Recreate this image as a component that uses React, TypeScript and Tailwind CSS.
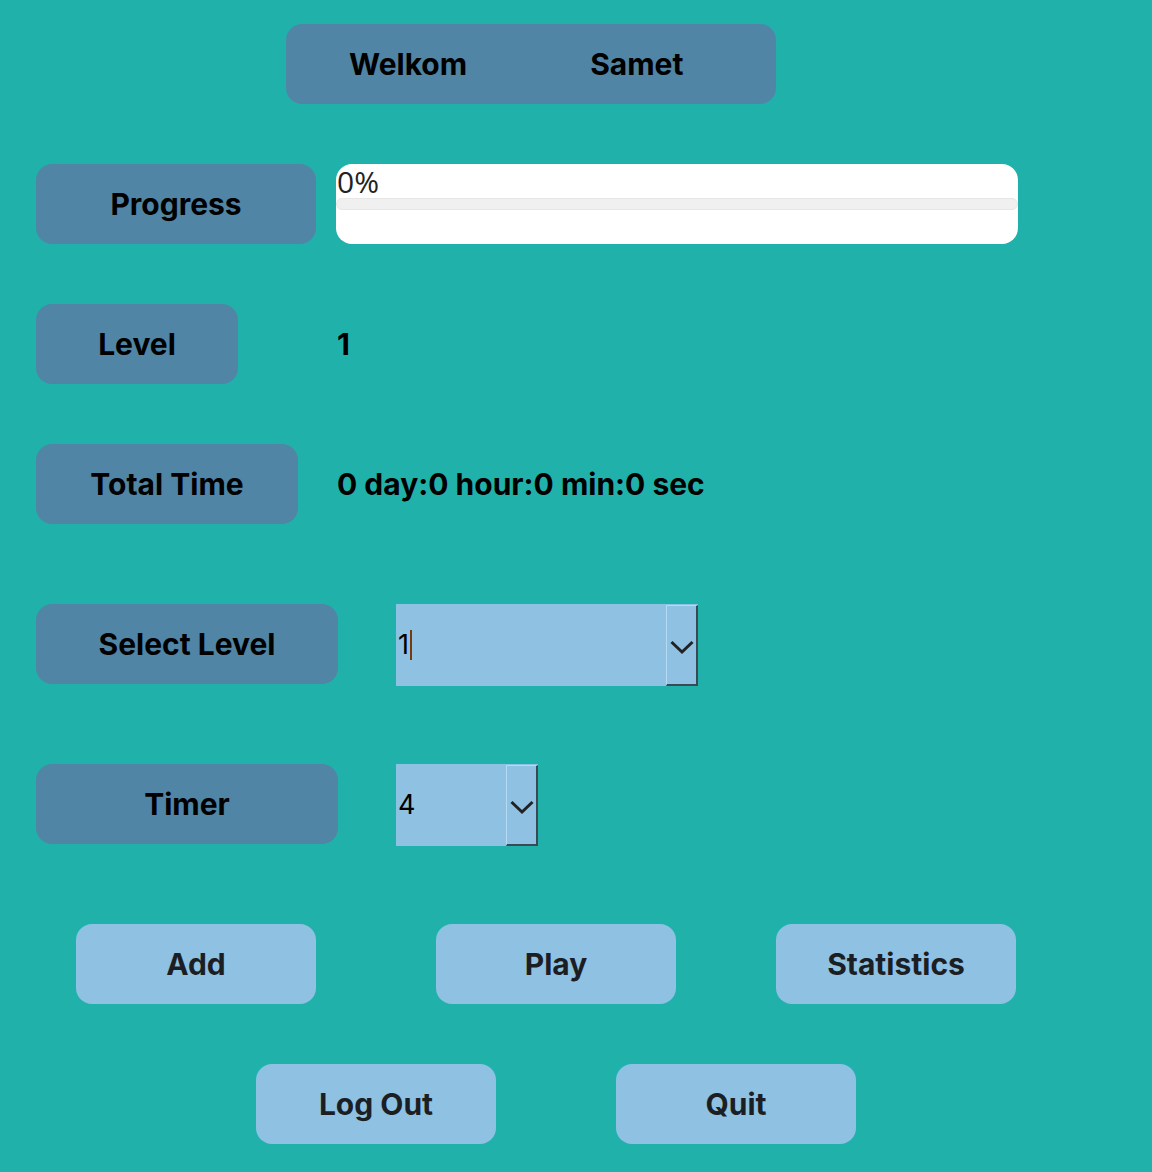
import React from "react";

const dark = "bg-[#5085A5]";
const light = "bg-[#8FC1E3]";

function Label({ w, children }: { w: string; children: React.ReactNode }) {
  return (
    <div className={`${dark} ${w} h-[80px] rounded-[16px] flex items-center justify-center text-[30px] font-bold text-black shrink-0`}>
      {children}
    </div>
  );
}

function LightBtn({ children }: { children: React.ReactNode }) {
  return (
    <div className={`${light} w-[240px] h-[80px] rounded-[16px] flex items-center justify-center text-[30px] font-bold text-[#1b1f24] shrink-0`}>
      {children}
    </div>
  );
}

function Chevron() {
  return (
    <svg width="26" height="18" viewBox="0 0 26 18">
      <path d="M2.5 4 L13 14 L23.5 4" stroke="#222" strokeWidth="3" fill="none" />
    </svg>
  );
}

function Combo({ w, value, caret }: { w: string; value: string; caret?: boolean }) {
  return (
    <div className={`${light} ${w} h-[82px] flex items-stretch shrink-0`}>
      <div className="flex-1 flex items-center pl-[2px] text-[27px] text-black font-normal">
        <span>{value}</span>
        {caret && <span className="inline-block w-[2px] h-[30px] bg-[#7a3a10] ml-[1px]" />}
      </div>
      <div className="w-[32px] flex items-center justify-center border-t border-l border-t-[#b5dcf5] border-l-[#b5dcf5] border-r-2 border-b-2 border-r-[#3a4a55] border-b-[#3a4a55] mt-[1px] pt-[3px]">
        <Chevron />
      </div>
    </div>
  );
}

export default function App() {
  return (
    <div
      className="w-[1152px] h-[1172px] bg-[#20B2AA] overflow-hidden"
      style={{ fontFamily: "Inter, 'Noto Sans', sans-serif" }}
    >
      <div className="pt-[24px] pl-[286px]">
        <div className={`${dark} w-[490px] h-[80px] rounded-[16px] flex items-center text-[30px] font-bold text-black`}>
          <span className="ml-[63px]">Welkom</span>
          <span className="ml-[123px]">Samet</span>
        </div>
      </div>

      <div className="flex items-center pl-[36px] mt-[60px] gap-[20px]">
        <Label w="w-[280px]">Progress</Label>
        <div className="bg-white w-[682px] h-[80px] rounded-[16px] flex flex-col pt-[2px]">
          <div className="text-[30px] leading-[32px] text-[#222] font-normal pl-[1px]" style={{ fontFamily: "'Open Sans', sans-serif" }}>0%</div>
          <div className="h-[12px] bg-[#f0f0f0] rounded-full border border-[#e6e6e6]" />
        </div>
      </div>

      <div className="flex items-center pl-[36px] mt-[60px]">
        <Label w="w-[202px]">Level</Label>
        <span className="ml-[99px] text-[30px] font-bold text-black">1</span>
      </div>

      <div className="flex items-center pl-[36px] mt-[60px]">
        <Label w="w-[262px]">Total Time</Label>
        <span className="ml-[39px] text-[30px] font-bold text-black">0 day:0 hour:0 min:0 sec</span>
      </div>

      <div className="flex items-start pl-[36px] mt-[80px]">
        <Label w="w-[302px]">Select Level</Label>
        <div className="ml-[58px]">
          <Combo w="w-[302px]" value="1" caret />
        </div>
      </div>

      <div className="flex items-start pl-[36px] mt-[78px]">
        <Label w="w-[302px]">Timer</Label>
        <div className="ml-[58px]">
          <Combo w="w-[142px]" value="4" />
        </div>
      </div>

      <div className="flex pl-[76px] mt-[78px] gap-[120px]">
        <LightBtn>Add</LightBtn>
        <LightBtn>Play</LightBtn>
        <div className="-ml-[20px]">
          <LightBtn>Statistics</LightBtn>
        </div>
      </div>

      <div className="flex pl-[256px] mt-[60px] gap-[120px]">
        <LightBtn>Log Out</LightBtn>
        <LightBtn>Quit</LightBtn>
      </div>
    </div>
  );
}
